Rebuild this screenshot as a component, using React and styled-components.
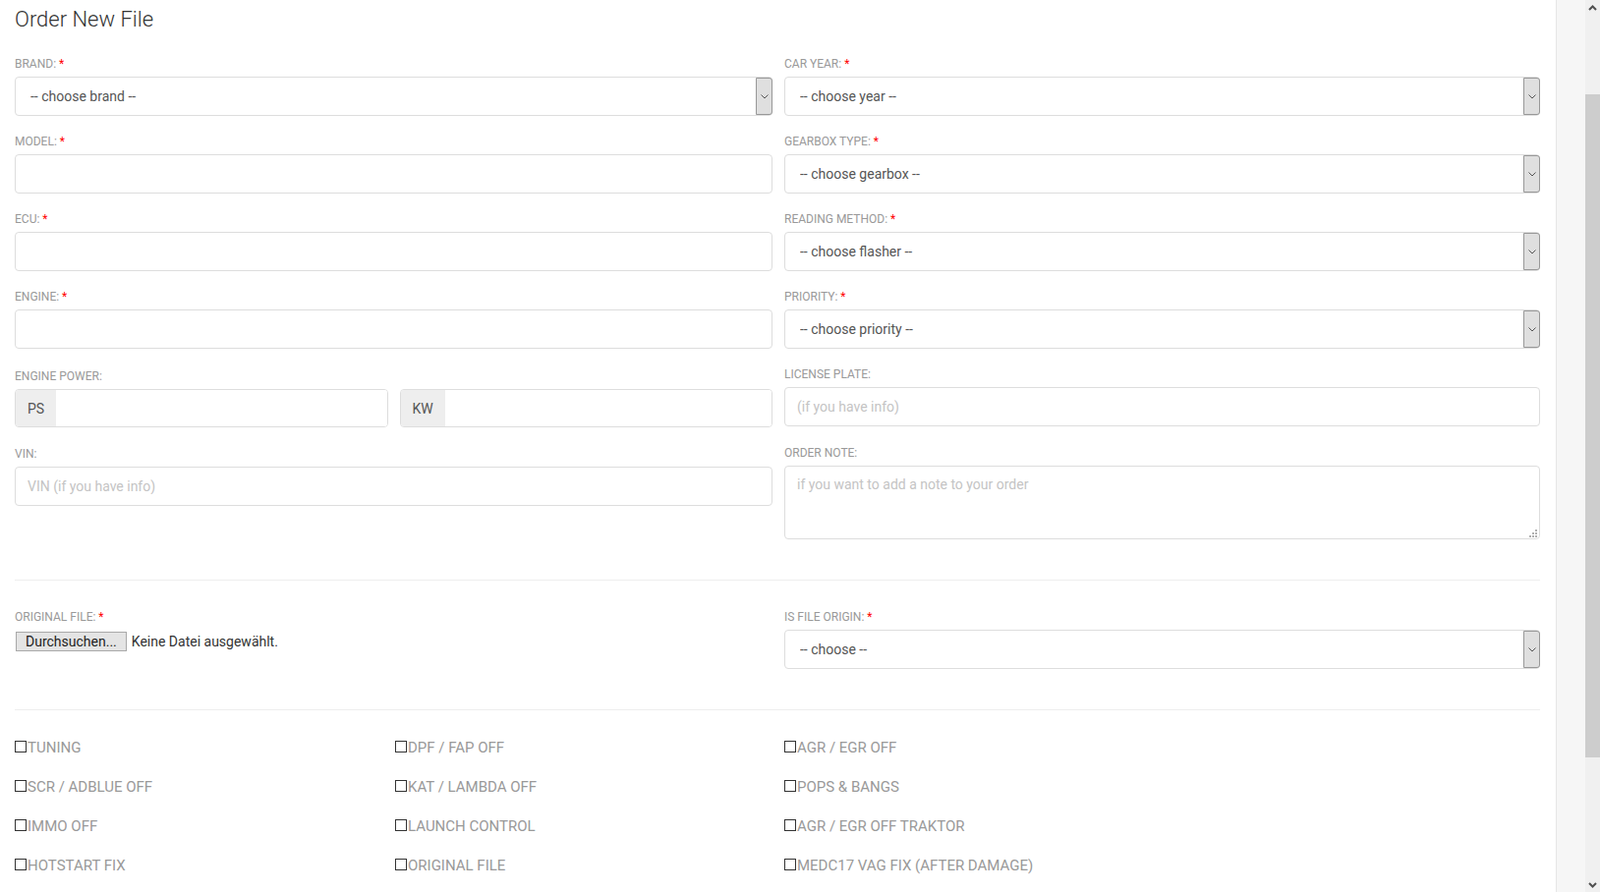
import React from "react";
import styled, { createGlobalStyle } from "styled-components";

const GlobalStyle = createGlobalStyle`
  *, *::before, *::after {
    box-sizing: border-box;
  }
  html, body {
    margin: 0;
    padding: 0;
    overflow: hidden;
    background: #fff;
  }
  body {
    font-family: "Roboto", "Liberation Sans", sans-serif;
    color: #555;
  }
`;

const leftFields = [
  { label: "Brand", required: true, type: "select", value: "-- choose brand --" },
  { label: "Model", required: true, type: "text" },
  { label: "ECU", required: true, type: "text" },
  { label: "Engine", required: true, type: "text" },
  { label: "Engine power", type: "power", shift: 2 },
  { label: "VIN", type: "text", placeholder: "VIN (if you have info)", shift: 1 },
];

const rightFields = [
  { label: "Car year", required: true, type: "select", value: "-- choose year --" },
  { label: "Gearbox type", required: true, type: "select", value: "-- choose gearbox --" },
  { label: "Reading method", required: true, type: "select", value: "-- choose flasher --" },
  { label: "Priority", required: true, type: "select", value: "-- choose priority --" },
  { label: "License plate", type: "text", placeholder: "(if you have info)" },
  { label: "Order note", type: "note", placeholder: "if you want to add a note to your order", shift: 1 },
];

const options = [
  "TUNING",
  "DPF / FAP OFF",
  "AGR / EGR OFF",
  "SCR / ADBLUE OFF",
  "KAT / LAMBDA OFF",
  "POPS & BANGS",
  "IMMO OFF",
  "LAUNCH CONTROL",
  "AGR / EGR OFF TRAKTOR",
  "HOTSTART FIX",
  "ORIGINAL FILE",
  "MEDC17 VAG FIX (AFTER DAMAGE)",
];

const Shell = styled.div`
  display: flex;
  height: 100vh;
  width: 100vw;
`;

const Main = styled.main`
  flex: 0 0 1584px;
  height: 100%;
  padding: 0 16px 0 15px;
  border-right: 1px solid #e6e6e6;
  overflow: hidden;
`;

const Gutter = styled.div`
  flex: 0 0 29px;
  background: #f6f6f6;
`;

const ScrollBar = styled.div`
  flex: 0 0 15px;
  display: flex;
  flex-direction: column;
  background: #f0f0f0;
`;

const ScrollArrow = styled.div`
  height: 15px;
  display: flex;
  align-items: center;
  justify-content: center;
`;

const ScrollGap = styled.div`
  height: ${(p) => p.$h}px;
`;

const ScrollThumb = styled.div`
  height: 675px;
  background: #cdcdcd;
`;

const ScrollRest = styled.div`
  flex: 1;
`;

const Title = styled.h3`
  margin: 8px 0 25px;
  font-size: 22px;
  line-height: 24px;
  font-weight: 300;
  color: #333;
`;

const FieldGrid = styled.div`
  display: grid;
  grid-template-columns: 771px 1fr;
  column-gap: 12px;
  align-items: start;
`;

const Column = styled.div`
  display: flex;
  flex-direction: column;
`;

const Group = styled.div`
  margin-top: ${(p) => p.$shift || 0}px;
  margin-bottom: 18px;
`;

const Label = styled.label`
  display: block;
  margin-bottom: 4px;
  font-size: 12px;
  line-height: 17px;
  color: #999;
  text-transform: uppercase;
`;

const Star = styled.span`
  color: #f00;
`;

const SelectWrap = styled.div`
  display: flex;
  height: 40px;
  border: 1px solid #ddd;
  border-radius: 4px;
  background: #fff;
`;

const SelectField = styled.select`
  flex: 1;
  appearance: none;
  border: 0;
  outline: none;
  background: transparent;
  padding: 0 0 0 15px;
  font-family: inherit;
  font-size: 14px;
  color: #555;
`;

const ArrowBox = styled.div`
  flex: 0 0 17px;
  margin-right: -1px;
  display: flex;
  align-items: center;
  justify-content: center;
  background: #dfdfdf;
  border: 1px solid #989898;
  border-radius: 0 3px 3px 0;
`;

const TextField = styled.input`
  display: block;
  width: 100%;
  height: 40px;
  padding: 0 12px;
  border: 1px solid #ddd;
  border-radius: 4px;
  outline: none;
  font-family: inherit;
  font-size: 14px;
  color: #555;
  &::placeholder {
    color: #c4c4c4;
  }
`;

const PowerRow = styled.div`
  display: grid;
  grid-template-columns: 1fr 1fr;
  column-gap: 12px;
`;

const AddonBox = styled.div`
  display: flex;
  height: 39px;
  border: 1px solid #ddd;
  border-radius: 4px;
  overflow: hidden;
`;

const Addon = styled.span`
  flex: 0 0 ${(p) => p.$w}px;
  display: flex;
  align-items: center;
  justify-content: center;
  background: #eee;
  font-size: 14px;
  color: #555;
`;

const AddonInput = styled.input`
  flex: 1;
  min-width: 0;
  border: 0;
  outline: none;
  padding: 0 12px;
  font-family: inherit;
  font-size: 14px;
`;

const NoteWrap = styled.div`
  position: relative;
`;

const NoteField = styled.textarea`
  display: block;
  width: 100%;
  height: 75px;
  padding: 8px 12px 6px;
  border: 1px solid #ddd;
  border-radius: 4px;
  outline: none;
  resize: none;
  font-family: inherit;
  font-size: 14px;
  line-height: 20px;
  color: #555;
  &::placeholder {
    color: #c4c4c4;
  }
`;

const Grip = styled.svg`
  position: absolute;
  right: 3px;
  bottom: 2px;
`;

const Divider = styled.hr`
  margin: ${(p) => p.$top}px 0 ${(p) => p.$bottom}px;
  border: 0;
  border-top: 1px solid #eee;
`;

const FileRow = styled.div`
  display: flex;
  align-items: center;
  gap: 5px;
  height: 20px;
  margin-top: 6px;
  padding-left: 1px;
`;

const FileButton = styled.button`
  height: 20px;
  padding: 0 9px;
  border: 1px solid #a9a9a9;
  border-radius: 0;
  background: #e4e4e4;
  font-family: inherit;
  font-size: 14px;
  line-height: 18px;
  color: #222;
`;

const FileStatus = styled.span`
  font-size: 14px;
  color: #333;
`;

const CheckGrid = styled.div`
  display: grid;
  grid-template-columns: 387px 396px 1fr;
  row-gap: 20px;
`;

const CheckItem = styled.label`
  display: flex;
  align-items: flex-start;
  font-size: 15px;
  line-height: 20px;
  color: #999;
  white-space: nowrap;
`;

const CheckBox = styled.input`
  appearance: none;
  flex: 0 0 12px;
  width: 12px;
  height: 12px;
  margin: 3px 1px 0 0;
  border: 1px solid #333;
  border-radius: 0;
  background: #fff;
`;

const Chevron = () => (
  <svg width="8" height="5" viewBox="0 0 8 5">
    <path d="M0.5 0.5 L4 4 L7.5 0.5" fill="none" stroke="#555" strokeWidth="1" />
  </svg>
);

const ScrollChevron = ({ up }) => (
  <svg width="9" height="6" viewBox="0 0 9 6">
    <path
      d={up ? "M1 5 L4.5 1.5 L8 5" : "M1 1 L4.5 4.5 L8 1"}
      fill="none"
      stroke="#505050"
      strokeWidth="2"
    />
  </svg>
);

const FieldLabel = ({ text, required }) => (
  <Label>
    {text}:{required && <Star> *</Star>}
  </Label>
);

const Select = ({ value }) => (
  <SelectWrap>
    <SelectField defaultValue="">
      <option value="">{value}</option>
    </SelectField>
    <ArrowBox>
      <Chevron />
    </ArrowBox>
  </SelectWrap>
);

const Field = ({ field }) => {
  let control = null;
  if (field.type === "select") control = <Select value={field.value} />;
  if (field.type === "text")
    control = <TextField type="text" placeholder={field.placeholder} />;
  if (field.type === "power")
    control = (
      <PowerRow>
        <AddonBox>
          <Addon $w={41}>PS</Addon>
          <AddonInput type="text" />
        </AddonBox>
        <AddonBox>
          <Addon $w={45}>KW</Addon>
          <AddonInput type="text" />
        </AddonBox>
      </PowerRow>
    );
  if (field.type === "note")
    control = (
      <NoteWrap>
        <NoteField placeholder={field.placeholder} />
        <Grip width="8" height="8" viewBox="0 0 8 8">
          {[
            [6, 0],
            [3, 3],
            [6, 3],
            [0, 6],
            [3, 6],
            [6, 6],
          ].map(([x, y]) => (
            <rect key={`${x}-${y}`} x={x} y={y} width="2" height="2" fill="#b0b0b0" />
          ))}
        </Grip>
      </NoteWrap>
    );

  return (
    <Group $shift={field.shift}>
      <FieldLabel text={field.label} required={field.required} />
      {control}
    </Group>
  );
};

const App = () => {
  return (
    <>
      <GlobalStyle />
      <Shell>
        <Main>
          <Title>Order New File</Title>

          <FieldGrid>
            <Column>
              {leftFields.map((f) => (
                <Field key={f.label} field={f} />
              ))}
            </Column>
            <Column>
              {rightFields.map((f) => (
                <Field key={f.label} field={f} />
              ))}
            </Column>
          </FieldGrid>

          <Divider $top={23} $bottom={29} />

          <FieldGrid>
            <Group>
              <FieldLabel text="Original file" required />
              <FileRow>
                <FileButton type="button">Durchsuchen...</FileButton>
                <FileStatus>Keine Datei ausgewählt.</FileStatus>
              </FileRow>
            </Group>
            <Group>
              <FieldLabel text="Is file origin" required />
              <Select value="-- choose --" />
            </Group>
          </FieldGrid>

          <Divider $top={23} $bottom={28} />

          <CheckGrid>
            {options.map((o) => (
              <CheckItem key={o}>
                <CheckBox type="checkbox" />
                {o}
              </CheckItem>
            ))}
          </CheckGrid>
        </Main>
        <Gutter />
        <ScrollBar>
          <ScrollArrow>
            <ScrollChevron up />
          </ScrollArrow>
          <ScrollGap $h={81} />
          <ScrollThumb />
          <ScrollRest />
          <ScrollArrow>
            <ScrollChevron />
          </ScrollArrow>
        </ScrollBar>
      </Shell>
    </>
  );
};

export default App;
